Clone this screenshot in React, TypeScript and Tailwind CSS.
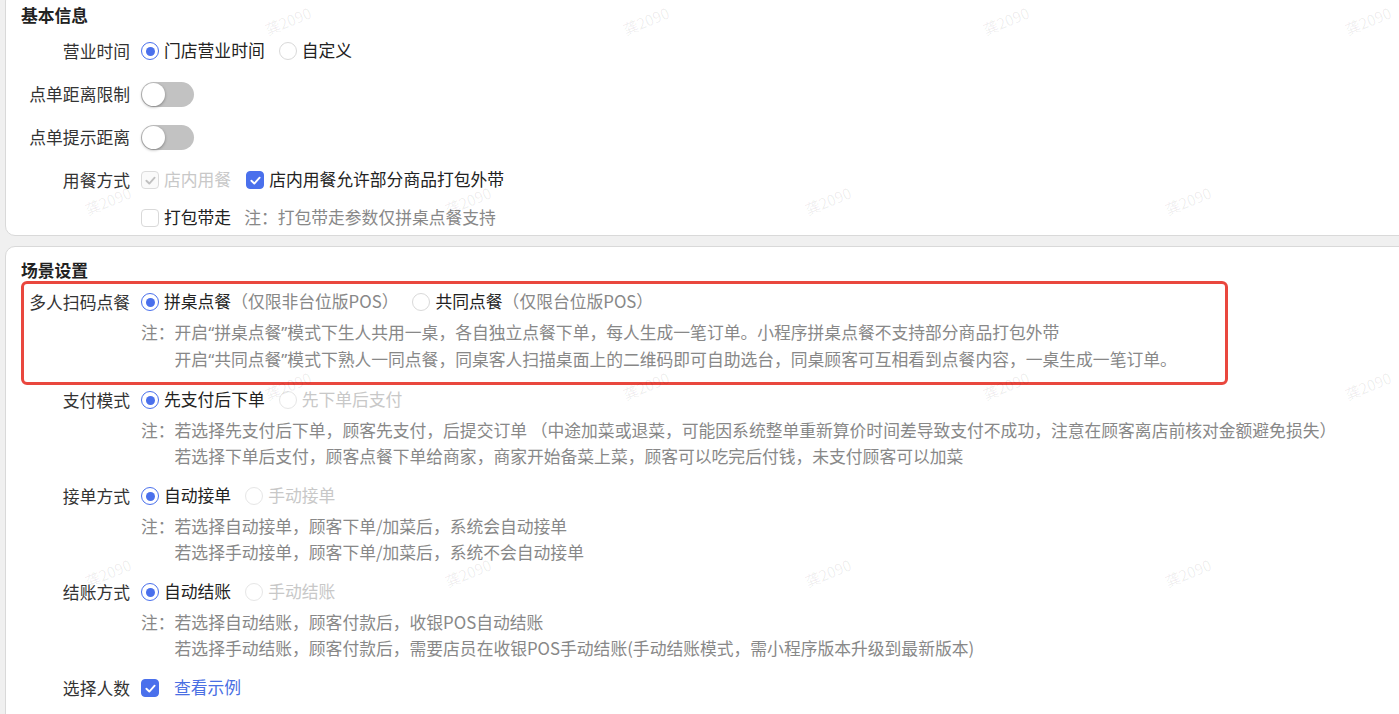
import React from "react";

// curly quotes render narrow in the reference, so give them a latin font
function Q({ text }: { text: string }) {
  const parts = text.split(/([“”])/);
  return (
    <>
      {parts.map((p, i) =>
        p === "“" || p === "”" ? (
          <span key={i} style={{ fontFamily: '"Noto Sans", sans-serif' }}>
            {p}
          </span>
        ) : (
          <React.Fragment key={i}>{p}</React.Fragment>
        )
      )}
    </>
  );
}

function Radio({
  checked = false,
  disabled = false,
  children,
}: {
  checked?: boolean;
  disabled?: boolean;
  children: React.ReactNode;
}) {
  return (
    <label className="flex items-center mr-[14px]">
      <span
        className={`w-[18px] h-[18px] rounded-full border bg-white flex items-center justify-center ${
          checked ? "border-[#4a70ec]" : disabled ? "border-[#e6e6e6]" : "border-[#d9d9d9]"
        }`}
      >
        {checked && <span className="w-[9px] h-[9px] rounded-full bg-[#4a70ec]" />}
      </span>
      <span className={`ml-[5px] ${disabled ? "text-[#c8c8c8]" : "text-[#222]"}`}>{children}</span>
    </label>
  );
}

function Checkbox({
  checked = false,
  disabled = false,
  children,
}: {
  checked?: boolean;
  disabled?: boolean;
  children?: React.ReactNode;
}) {
  const box =
    checked && !disabled
      ? "bg-[#4a70ec] border-[#4a70ec]"
      : disabled
      ? "bg-[#fafafa] border-[#dcdcdc]"
      : "bg-white border-[#d9d9d9]";
  return (
    <label className="flex items-center mr-[15px]">
      <span className={`w-[18px] h-[18px] rounded-[4px] border flex items-center justify-center ${box}`}>
        {checked && (
          <svg width="13" height="13" viewBox="0 0 12 12" fill="none">
            <path
              d="M2.2 6.2 L4.9 8.8 L9.8 3.4"
              stroke={disabled ? "#c0c0c0" : "#fff"}
              strokeWidth="1.7"
              strokeLinecap="round"
              strokeLinejoin="round"
            />
          </svg>
        )}
      </span>
      {children && (
        <span className={`ml-[5px] ${disabled ? "text-[#c8c8c8]" : "text-[#222]"}`}>{children}</span>
      )}
    </label>
  );
}

function Switch() {
  return (
    <div className="w-[53px] h-[25px] rounded-full bg-[#c2c2c2] flex items-center px-[1px]">
      <span className="w-[23px] h-[23px] rounded-full bg-white shadow-[0_1px_3px_rgba(0,0,0,0.35)]" />
    </div>
  );
}

function Item({
  label,
  children,
  notes,
  className = "",
}: {
  label: string;
  children: React.ReactNode;
  notes?: string[];
  className?: string;
}) {
  return (
    <div className={`flex ${className}`}>
      <div className="w-[120px] shrink-0 pr-[11px] h-[34px] leading-[34px] text-right text-[#333] whitespace-nowrap">
        {label}
      </div>
      <div className="flex-1">
        <div className="flex items-center h-[34px] whitespace-nowrap">{children}</div>
        {notes && (
          <div className="flex text-[#888] leading-[26px] whitespace-nowrap">
            <span>注：</span>
            <div className="flex flex-col">
              {notes.map((n, i) => (
                <span key={i}>
                  <Q text={n} />
                </span>
              ))}
            </div>
          </div>
        )}
      </div>
    </div>
  );
}

const marks = [
  { x: 290, y: 20 },
  { x: 648, y: 20 },
  { x: 1008, y: 20 },
  { x: 1370, y: 20 },
  { x: 110, y: 200 },
  { x: 470, y: 200 },
  { x: 830, y: 200 },
  { x: 1190, y: 200 },
  { x: 290, y: 385 },
  { x: 648, y: 385 },
  { x: 1008, y: 385 },
  { x: 1370, y: 385 },
  { x: 110, y: 572 },
  { x: 470, y: 572 },
  { x: 830, y: 572 },
  { x: 1190, y: 572 },
];

export default function App() {
  return (
    <div
      className="relative w-full h-[714px] overflow-hidden bg-[#f0f0f0] text-[16.8px]"
      style={{ fontFamily: '"Noto Sans CJK SC", "Microsoft YaHei", sans-serif' }}
    >
      <div className="-mt-[9px] ml-[5px] mr-[-20px] flex flex-col gap-[10px]">
        {/* 基本信息 */}
        <section className="bg-white border border-[#d9d9d9] rounded-[10px] pl-[15px] pt-[11px]">
          <h2 className="font-bold text-[#222] leading-[24px]">基本信息</h2>
          <Item label="营业时间" className="mt-[7px]">
            <Radio checked>门店营业时间</Radio>
            <Radio>自定义</Radio>
          </Item>
          <Item label="点单距离限制" className="mt-[9px]">
            <Switch />
          </Item>
          <Item label="点单提示距离" className="mt-[9px]">
            <Switch />
          </Item>
          <Item label="用餐方式" className="mt-[9px]">
            <Checkbox checked disabled>
              店内用餐
            </Checkbox>
            <Checkbox checked>店内用餐允许部分商品打包外带</Checkbox>
          </Item>
          <div className="flex items-center h-[34px] mt-[4px] pl-[120px] whitespace-nowrap">
            <Checkbox>打包带走</Checkbox>
            <span className="text-[#888] -ml-[2px]">注：打包带走参数仅拼桌点餐支持</span>
          </div>
        </section>

        {/* 场景设置 */}
        <section className="bg-white border border-[#d9d9d9] rounded-[10px] pl-[15px] pt-[11px] pb-[20px]">
          <h2 className="font-bold text-[#222] leading-[24px]">场景设置</h2>
          <div className="relative mt-[3px]">
            <Item
              label="多人扫码点餐"
              notes={[
                "开启“拼桌点餐”模式下生人共用一桌，各自独立点餐下单，每人生成一笔订单。小程序拼桌点餐不支持部分商品打包外带",
                "开启“共同点餐”模式下熟人一同点餐，同桌客人扫描桌面上的二维码即可自助选台，同桌顾客可互相看到点餐内容，一桌生成一笔订单。",
              ]}
            >
              <Radio checked>
                拼桌点餐<span className="text-[#888]">（仅限非台位版POS）</span>
              </Radio>
              <Radio>
                共同点餐<span className="text-[#888]">（仅限台位版POS）</span>
              </Radio>
            </Item>
            <div className="absolute -top-[4px] -bottom-[12px] left-0 w-[1207px] border-[3px] border-[#e9473e] rounded-[6px] pointer-events-none" />
          </div>
          <Item
            label="支付模式"
            className="mt-[10px]"
            notes={[
              "若选择先支付后下单，顾客先支付，后提交订单 （中途加菜或退菜，可能因系统整单重新算价时间差导致支付不成功，注意在顾客离店前核对金额避免损失）",
              "若选择下单后支付，顾客点餐下单给商家，商家开始备菜上菜，顾客可以吃完后付钱，未支付顾客可以加菜",
            ]}
          >
            <Radio checked>先支付后下单</Radio>
            <Radio disabled>先下单后支付</Radio>
          </Item>
          <Item
            label="接单方式"
            className="mt-[10px]"
            notes={["若选择自动接单，顾客下单/加菜后，系统会自动接单", "若选择手动接单，顾客下单/加菜后，系统不会自动接单"]}
          >
            <Radio checked>自动接单</Radio>
            <Radio disabled>手动接单</Radio>
          </Item>
          <Item
            label="结账方式"
            className="mt-[10px]"
            notes={[
              "若选择自动结账，顾客付款后，收银POS自动结账",
              "若选择手动结账，顾客付款后，需要店员在收银POS手动结账(手动结账模式，需小程序版本升级到最新版本)",
            ]}
          >
            <Radio checked>自动结账</Radio>
            <Radio disabled>手动结账</Radio>
          </Item>
          <Item label="选择人数" className="mt-[10px]">
            <Checkbox checked />
            <a className="text-[#4a6fe3] cursor-pointer">查看示例</a>
          </Item>
        </section>
      </div>

      {/* watermark */}
      {marks.map((m, i) => (
        <span
          key={i}
          className="absolute pointer-events-none select-none text-[15px] text-[#000]/[0.07] -rotate-[22deg] whitespace-nowrap"
          style={{ left: m.x - 26, top: m.y - 10 }}
        >
          龚2090
        </span>
      ))}
    </div>
  );
}
